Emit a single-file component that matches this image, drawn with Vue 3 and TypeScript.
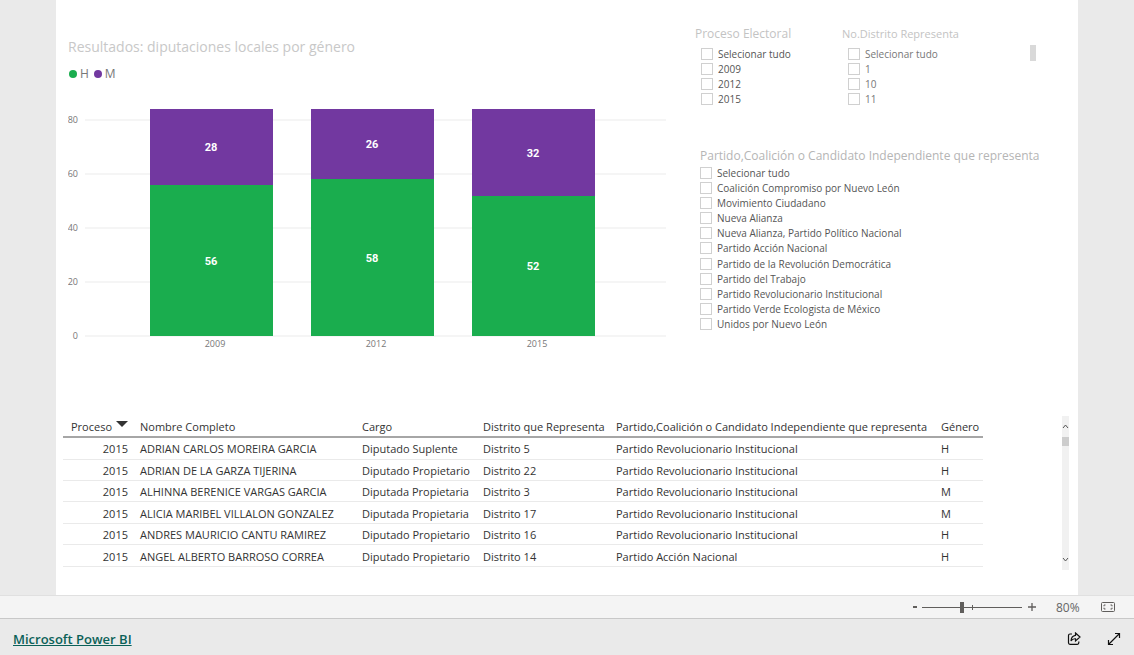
<script setup lang="ts">
import { ref } from 'vue'

interface Bar { year: string; h: number; m: number }
interface Row { year: number; name: string; post: string; district: string; party: string; gender: string }

const bars: Bar[] = [
  { year: '2009', h: 56, m: 28 },
  { year: '2012', h: 58, m: 26 },
  { year: '2015', h: 52, m: 32 },
]
const ticks = [0, 20, 40, 60, 80]
const baseline = 232
const unit = 2.7
const barWidth = 123
const barX = (i: number): number => 82 + i * 161
const valueY = (v: number): number => Math.round(baseline - v * unit)

const years = ['Selecionar tudo', '2009', '2012', '2015']
const districts = ['Selecionar tudo', '1', '10', '11']
const parties = [
  'Selecionar tudo',
  'Coalición Compromiso por Nuevo León',
  'Movimiento Ciudadano',
  'Nueva Alianza',
  'Nueva Alianza, Partido Político Nacional',
  'Partido Acción Nacional',
  'Partido de la Revolución Democrática',
  'Partido del Trabajo',
  'Partido Revolucionario Institucional',
  'Partido Verde Ecologista de México',
  'Unidos por Nuevo León',
]

const pri = 'Partido Revolucionario Institucional'
const rows: Row[] = [
  { year: 2015, name: 'ADRIAN CARLOS MOREIRA GARCIA', post: 'Diputado Suplente', district: 'Distrito 5', party: pri, gender: 'H' },
  { year: 2015, name: 'ADRIAN DE LA GARZA TIJERINA', post: 'Diputado Propietario', district: 'Distrito 22', party: pri, gender: 'H' },
  { year: 2015, name: 'ALHINNA BERENICE VARGAS GARCIA', post: 'Diputada Propietaria', district: 'Distrito 3', party: pri, gender: 'M' },
  { year: 2015, name: 'ALICIA MARIBEL VILLALON GONZALEZ', post: 'Diputada Propietaria', district: 'Distrito 17', party: pri, gender: 'M' },
  { year: 2015, name: 'ANDRES MAURICIO CANTU RAMIREZ', post: 'Diputado Propietario', district: 'Distrito 16', party: pri, gender: 'H' },
  { year: 2015, name: 'ANGEL ALBERTO BARROSO CORREA', post: 'Diputado Propietario', district: 'Distrito 14', party: 'Partido Acción Nacional', gender: 'H' },
]

// The slider's midpoint stands for 100 %.
const zoom = ref(40)
</script>

<template>
  <div class="app">
    <main class="report">
      <div class="top">
        <section class="chart">
          <h2>Resultados: diputaciones locales por género</h2>
          <ul class="legend">
            <li><i class="dot green"></i>H</li>
            <li><i class="dot purple"></i>M</li>
          </ul>
          <svg class="plot" viewBox="0 0 598 250" role="img" aria-label="Diputaciones por género">
            <g v-for="t in ticks" :key="t">
              <line x1="17" x2="598" :y1="valueY(t)" :y2="valueY(t)" class="grid-line" />
              <text x="10" :y="valueY(t) + 3" class="axis end">{{ t }}</text>
            </g>
            <g v-for="(b, i) in bars" :key="b.year">
              <rect :x="barX(i)" :y="valueY(b.h + b.m)" :width="barWidth" :height="valueY(b.h) - valueY(b.h + b.m)" class="bar-m" />
              <rect :x="barX(i)" :y="valueY(b.h)" :width="barWidth" :height="baseline - valueY(b.h)" class="bar-h" />
              <text :x="barX(i) + 61" :y="(valueY(b.h) + valueY(b.h + b.m)) / 2 + 4" class="value">{{ b.m }}</text>
              <text :x="barX(i) + 61" :y="(valueY(b.h) + baseline) / 2 + 4" class="value">{{ b.h }}</text>
              <text :x="barX(i) + 65" y="243" class="axis">{{ b.year }}</text>
            </g>
          </svg>
        </section>

        <div class="filters">
          <div class="pair">
            <fieldset class="slicer years">
              <legend>Proceso Electoral</legend>
              <div class="options">
                <label v-for="y in years" :key="y"><input type="checkbox" />{{ y }}</label>
              </div>
            </fieldset>
            <fieldset class="slicer districts">
              <legend>No.Distrito Representa</legend>
              <div class="options">
                <label v-for="d in districts" :key="d"><input type="checkbox" />{{ d }}</label>
              </div>
            </fieldset>
            <div class="mini-thumb"></div>
          </div>
          <fieldset class="slicer parties">
            <legend>Partido,Coalición o Candidato Independiente que representa</legend>
            <div class="options">
              <label v-for="p in parties" :key="p"><input type="checkbox" />{{ p }}</label>
            </div>
          </fieldset>
        </div>
      </div>

      <section class="grid">
        <table>
          <colgroup>
            <col class="c-year" /><col class="c-name" /><col class="c-post" /><col class="c-district" /><col class="c-party" /><col class="c-gender" />
          </colgroup>
          <thead>
            <tr>
              <th>Proceso<svg class="sort" viewBox="0 0 12 6"><path d="M0 0h12L6 6z" /></svg></th>
              <th>Nombre Completo</th>
              <th>Cargo</th>
              <th>Distrito que Representa</th>
              <th>Partido,Coalición o Candidato Independiente que representa</th>
              <th>Género</th>
            </tr>
          </thead>
          <tbody>
            <tr v-for="r in rows" :key="r.name">
              <td class="num">{{ r.year }}</td>
              <td>{{ r.name }}</td>
              <td>{{ r.post }}</td>
              <td>{{ r.district }}</td>
              <td>{{ r.party }}</td>
              <td>{{ r.gender }}</td>
            </tr>
          </tbody>
        </table>
        <div class="scrollbar">
          <svg viewBox="0 0 7 5"><path d="M1 4l2.5-3L6 4" /></svg>
          <div class="thumb"></div>
          <svg viewBox="0 0 7 5"><path d="M1 1l2.5 3L6 1" /></svg>
        </div>
      </section>
    </main>

    <div class="zoom-bar">
      <button class="step" aria-label="Alejar"><svg viewBox="0 0 8 8"><path d="M2 4h4" stroke-width="2" /></svg></button>
      <input v-model.number="zoom" class="slider" type="range" min="0" max="100" aria-label="Zoom" />
      <button class="step" aria-label="Acercar"><svg viewBox="0 0 8 8"><path d="M0 4h8M4 0v8" stroke-width="1.3" /></svg></button>
      <span class="percent">{{ zoom * 2 }}%</span>
      <button class="fit" aria-label="Ajustar a la página">
        <svg viewBox="0 0 14 10">
          <rect x=".5" y=".5" width="13" height="9" rx="1" />
          <path d="M4.500 3H3v1.300M3 5.700V7h1.500M9.500 3H11v1.300M11 5.700V7H9.500" />
        </svg>
      </button>
    </div>

    <footer class="footer">
      <a href="#">Microsoft Power BI</a>
      <div class="actions">
        <button aria-label="Compartir">
          <svg viewBox="0 0 14 14">
            <path d="M5 2H3Q1.500 2 1.500 3.500v7.300Q1.500 12.300 3 12.300h7.300q1.500 0 1.500-1.500V9.500" />
            <path d="M8.500 1l4.500 4-4.500 4V6.800Q5.500 6.500 4 9q.3-5 4.500-5.600z" />
          </svg>
        </button>
        <button aria-label="Pantalla completa">
          <svg viewBox="0 0 14 14">
            <path d="M1.500 12.500l11-11M8 1.500h4.500V6M1.500 8v4.500H6" />
          </svg>
        </button>
      </div>
    </footer>
  </div>
</template>

<style>
body { margin: 0; }
</style>

<style scoped>
.app {
  min-height: 100vh;
  display: flex;
  flex-direction: column;
  background: #eaeaea;
  font-family: "Open Sans", "Noto Sans", sans-serif;
  font-size: 11px;
  color: #333;
}
.report {
  flex: 1;
  margin: 0 56px;
  background: #fff;
  display: flex;
  flex-direction: column;
}
.top {
  display: grid;
  grid-template-columns: minmax(0, 1fr) 383px;
  column-gap: 29px;
  padding: 25px 0 0 12px;
}
h2 {
  margin: 12px 0 0;
  font-size: 14px;
  line-height: 20px;
  font-weight: 400;
  color: #c8c8c8;
}
.legend {
  display: flex;
  gap: 5px;
  margin: 8px 0 22px;
  padding: 0 0 0 1px;
  list-style: none;
  font-size: 12px;
  line-height: 17px;
  color: #777;
}
.legend li { display: flex; align-items: center; gap: 3px; }
.dot { width: 8px; height: 8px; border-radius: 50%; }
.green { background: #1aad4e; }
.purple { background: #7238a0; }
.plot { display: block; width: 100%; }
.grid-line { stroke: #f5f5f5; stroke-width: 2; }
.axis { font-size: 9px; fill: #777; text-anchor: middle; }
.axis.end { text-anchor: end; }
.bar-m { fill: #7238a0; }
.bar-h { fill: #1aad4e; }
.value {
  font-family: Roboto, sans-serif;
  font-size: 11px;
  font-weight: 700;
  fill: #fff;
  text-anchor: middle;
}
.pair { display: flex; min-height: 122px; }
.slicer { margin: 0; padding: 0; border: 0; min-width: 0; color: #555; }
.slicer legend {
  padding: 0;
  line-height: 17px;
  font-size: 12px;
  color: #c3c3c3;
  white-space: nowrap;
}
.options { display: grid; grid-auto-rows: 15px; font-size: 10px; }
.options label { display: flex; align-items: center; gap: 5px; white-space: nowrap; }
.options input {
  appearance: none;
  flex: none;
  width: 12px;
  height: 12px;
  margin: 0;
  border: 1px solid #d0d0d0;
  background: #fff;
}
.options input:checked { background: #555; }
.years { width: 147px; }
.years .options { padding: 4px 0 0 6px; }
.districts { width: 188px; }
.districts legend { font-size: 11px; }
.districts .options { padding: 4px 0 0 6px; color: #777; }
.mini-thumb { width: 6px; height: 16px; margin-top: 20px; background: #d9d9d9; }
.parties { padding-left: 5px; }
.parties legend { color: #b5b5b5; }
.parties .options { min-height: 167px; grid-auto-rows: 1fr; padding-top: 1px; }

.grid {
  display: flex;
  justify-content: space-between;
  margin-top: 62px;
  padding: 0 9px 25px 7px;
}
table {
  width: 920px;
  height: 151px;
  table-layout: fixed;
  border-collapse: collapse;
  font-size: 11px;
  color: #333;
}
.c-year { width: 69px; }
.c-name { width: 222px; }
.c-post { width: 121px; }
.c-district { width: 133px; }
.c-party { width: 325px; }
.c-gender { width: 50px; }
th, td {
  padding: 1px 0 0 8px;
  text-align: left;
  font-weight: 400;
  white-space: nowrap;
  line-height: 19px;
}
th { border-bottom: 2px solid #a6a6a6; }
td { border-bottom: 1px solid #eaeaea; }
td.num { text-align: right; padding-right: 4px; }
.sort { width: 12px; height: 6px; margin: 0 0 4px 4px; fill: #333; }
.scrollbar {
  width: 7px;
  height: 154px;
  display: grid;
  grid-template-rows: 21px 9px 1fr;
  background: #f1f1f1;
}
.scrollbar svg { width: 7px; height: 5px; align-self: center; fill: none; stroke: #555; }
.scrollbar svg:last-child { align-self: end; margin-bottom: 8px; }
.scrollbar .thumb { background: #cdcdcd; }

button { padding: 0; border: 0; background: none; display: flex; cursor: pointer; }
.zoom-bar {
  display: flex;
  align-items: center;
  justify-content: flex-end;
  height: 22px;
  padding-right: 19px;
  border-top: 1px solid #e0e0e0;
  border-bottom: 1px solid #c8c8c8;
  background: #f4f4f4;
  color: #666;
}
.zoom-bar svg { fill: none; stroke: #605e5c; }
.step svg { width: 8px; height: 8px; }
.slider {
  appearance: none;
  width: 100px;
  height: 12px;
  margin: 0 6px 0 3px;
  background:
    linear-gradient(#605e5c, #605e5c) center / 1px 5px no-repeat,
    linear-gradient(#605e5c, #605e5c) center / 100% 1px no-repeat;
}
.slider::-webkit-slider-thumb {
  appearance: none;
  width: 4px;
  height: 11px;
  background: #605e5c;
}
.percent { width: 45px; margin-left: 20px; font-size: 12px; }
.fit svg { width: 14px; height: 10px; stroke-width: 1; }
.footer {
  display: flex;
  align-items: center;
  justify-content: space-between;
  height: 36px;
  padding: 0 13px;
}
.footer a { color: #0b6158; font-size: 13px; font-weight: 600; line-height: 36px; margin-top: 4px; }
.actions { display: flex; gap: 26px; margin-top: 3px; }
.actions svg { width: 14px; height: 14px; fill: none; stroke: #111; stroke-width: 1.2; }
</style>
